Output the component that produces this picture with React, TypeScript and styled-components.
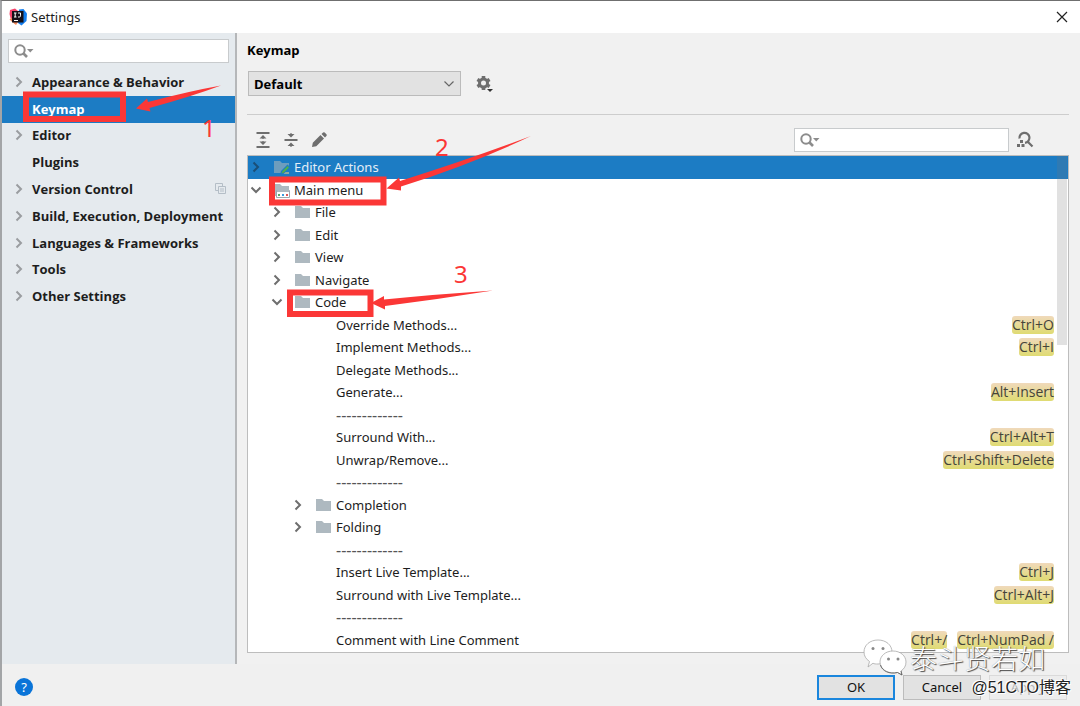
import React from 'react';
import styled, { createGlobalStyle, css } from 'styled-components';

const GlobalStyle = createGlobalStyle`
  *, *::before, *::after { box-sizing: border-box; }
  body { margin: 0; background: #f1f1f1; }
  button, input, select { font: inherit; color: inherit; }
`;

const red = '#fb3736';
const blue = '#1c7cc4';

const Window = styled.div`
  position: relative;
  display: flex;
  flex-direction: column;
  min-height: 100vh;
  border-top: 1px solid #6f6f6f;
  border-left: 2px solid #a3a5a7;
  background: #f0f0f0;
  font: 13px/18px "Noto Sans", "Noto Sans CJK SC", sans-serif;
  color: #1d1d1d;
`;

const TitleBar = styled.header`
  display: flex;
  align-items: center;
  gap: 4px;
  height: 32px;
  padding: 0 12px 0 7px;
  background: #fff;
`;

const WindowTitle = styled.h1`
  flex: 1;
  margin: 0;
  font-size: 13px;
  font-weight: 400;
`;

const IconButton = styled.button`
  display: flex;
  align-items: center;
  justify-content: center;
  padding: 0;
  border: 0;
  background: none;
`;

const Body = styled.div`
  flex: 1;
  display: flex;
`;

const Sidebar = styled.aside`
  flex: none;
  width: 235px;
  padding-top: 6px;
  border-right: 2px solid #b5b7b9;
  background: #e5eaee;
`;

const SearchBox = styled.label`
  display: flex;
  align-items: center;
  height: 24px;
  padding-left: 5px;
  border: 1px solid #c8cbcd;
  background: #fff;
`;

const SideSearch = styled(SearchBox)`
  margin: 0 6px;
`;

const SearchInput = styled.input`
  flex: 1;
  min-width: 0;
  border: 0;
  outline: 0;
  background: transparent;
`;

const Categories = styled.nav`
  display: grid;
  grid-auto-rows: 1fr;
  height: 241px;
  margin-top: 6px;
`;

const Category = styled.a<{ $selected?: boolean }>`
  display: flex;
  align-items: center;
  padding: 0 9px 1px 11px;
  font-family: "Open Sans", sans-serif;
  font-weight: 700;
  color: #1d1d1d;
  text-decoration: none;
  ${p => p.$selected && css`
    background: ${blue};
    color: #fff;
  `}
`;

const CategoryArrow = styled.span`
  display: flex;
  width: 19px;
`;

const CategoryName = styled.span`
  flex: 1;
  white-space: nowrap;
`;

const Main = styled.main`
  flex: 1;
  display: flex;
  flex-direction: column;
  min-width: 0;
  padding: 7px 11px 11px 10px;
  background: #f1f1f1;
`;

const Heading = styled.h2`
  margin: 0;
  font-family: "Open Sans", sans-serif;
  font-size: 13px;
  line-height: 20px;
  color: #000;
`;

const SchemeRow = styled.div`
  display: flex;
  align-items: center;
  gap: 14px;
  margin-top: 11px;
  padding: 0 0 18px 1px;
  border-bottom: 1px solid #cdcdcd;
`;

const SelectWrap = styled.div`
  display: grid;
  align-items: center;
  width: 213px;
  height: 25px;
  border: 1px solid #bbb;
  background: #e2e2e2;

  > * { grid-area: 1 / 1; }
  > svg { justify-self: end; margin-right: 5px; pointer-events: none; }
`;

const SchemeSelect = styled.select`
  appearance: none;
  width: 100%;
  height: 100%;
  padding: 0 5px;
  border: 0;
  background: transparent;
  font-family: "Open Sans", sans-serif;
  font-weight: 700;
  color: #000;
`;

const Toolbar = styled.div`
  display: flex;
  align-items: center;
  justify-content: space-between;
  margin-top: 13px;
  padding: 0 35px 0 8px;
`;

const ToolGroup = styled.div<{ $gap: number }>`
  display: flex;
  align-items: center;
  gap: ${p => p.$gap}px;
`;

const TreeSearch = styled(SearchBox)`
  width: 215px;
`;

const TreePanel = styled.div`
  position: relative;
  flex: 1;
  display: flex;
  margin-top: 3px;
  border: 1px solid #bdbdbd;
  background: #fff;
`;

const Tree = styled.ul`
  flex: 1;
  display: flex;
  flex-direction: column;
  margin: 0;
  padding: 0 0 1px;
  list-style: none;
`;

const Row = styled.li<{ $depth: number; $selected?: boolean }>`
  flex: 1 1 22px;
  display: flex;
  align-items: center;
  padding: 0 14px 0 ${p => p.$depth * 21 + 2}px;
  background: ${p => (p.$selected ? blue : 'transparent')};
  color: ${p => (p.$selected ? '#e4eef7' : '#1d1d1d')};
`;

const RowArrow = styled.span`
  display: flex;
  width: 24px;
`;

const RowIcon = styled.span`
  display: flex;
  width: 20px;
`;

const RowLabel = styled.span<{ $divider?: boolean }>`
  flex: 1;
  font-size: ${p => (p.$divider ? 16 : 13)}px;
  color: ${p => (p.$divider ? '#555' : 'inherit')};
  white-space: nowrap;
`;

const Shortcuts = styled.span`
  display: flex;
  gap: 10px;
`;

const Shortcut = styled.kbd`
  height: 18px;
  border-radius: 3px;
  background: linear-gradient(#f0d9bb, #dfdb72);
  font: 14px/18px "Open Sans", sans-serif;
  color: #45443a;
`;

const Scrollbar = styled.div`
  position: absolute;
  top: 0;
  right: 1px;
  width: 10px;
  height: 189px;
  background: rgba(120, 120, 120, 0.22);
`;

const Footer = styled.footer`
  display: flex;
  align-items: center;
  gap: 8px;
  height: 42px;
  padding: 4px 13px 0 13px;
`;

const HelpButton = styled.button`
  width: 18px;
  height: 18px;
  margin-right: auto;
  padding: 0;
  border: 0;
  border-radius: 50%;
  background: #0a74d8;
  font-size: 13px;
  line-height: 18px;
  color: #fff;
`;

const DialogButton = styled.button<{ $primary?: boolean }>`
  width: 78px;
  height: 25px;
  padding: 0 0 1px;
  border: ${p => (p.$primary ? '2px solid #1a86dd' : '1px solid #bcbcbc')};
  background: #e2e2e2;
  color: #111;

  &:disabled {
    border-color: #dadada;
    background: #ededed;
    color: #b4b4b4;
  }
`;

const Annotations = styled.svg`
  position: absolute;
  top: -1px;
  left: -2px;
  pointer-events: none;
  font: 24px "Noto Sans", sans-serif;
`;

const AuthorMark = styled.div`
  position: absolute;
  right: 35px;
  bottom: 29px;
  display: flex;
  align-items: center;
  gap: 3px;
  font: 300 27px/38px "Noto Sans CJK SC", sans-serif;
  color: #fff;
  text-shadow: 1px 1px 1px #444, 0 0 1px #888;
  pointer-events: none;
`;

const SiteMark = styled.div`
  position: absolute;
  right: 9px;
  bottom: 7px;
  font: 16px/22px "Liberation Sans", "Noto Sans CJK SC", sans-serif;
  color: #222;
  text-shadow: 1px 1px 0 #fff, -1px -1px 0 #fff;
  pointer-events: none;
`;

const Chevron = ({ open = false, color = '#6e6e6e' }: { open?: boolean; color?: string }) => (
  <svg width="12" height="12" viewBox="0 0 12 12" fill="none" stroke={color} strokeWidth="2">
    <path d={open ? 'M1.5 3.5 6 8l4.500-4.500' : 'M3.500 1.500 8 6l-4.500 4.500'} />
  </svg>
);

const SearchIcon = () => (
  <svg width="20" height="16" viewBox="0 0 20 16" fill="none" stroke="#8c8c8c">
    <circle cx="6" cy="7" r="4.700" strokeWidth="2" />
    <path d="m9.500 10.500 3.500 3.500" strokeWidth="2.600" />
    <path d="M13 6h6.500l-3.250 3.500z" fill="#8c8c8c" stroke="none" />
  </svg>
);

const CloseIcon = () => (
  <svg width="12" height="12" viewBox="0 0 12 12" stroke="#222" strokeWidth="1.200">
    <path d="m1 1 10 10M11 1 1 11" />
  </svg>
);

const AppLogo = () => (
  <svg width="18" height="18" viewBox="0 0 18 18">
    <path d="m1 2 5-1.500L9 3l-2 8-5 1-1.500-6z" fill="#f5406a" />
    <path d="m.5 11.500 4-3 5 5L7 17l-2-1.500z" fill="#f58a5c" />
    <path d="M10 1.500 14.500 1 18 5.500l-.5 7.500-5 4.500L9 15z" fill="#147ff0" />
    <path d="M3 3h11.500v11.500H3z" fill="#151019" />
    <path
      d="M5 5h2.500M6.200 5v4M5 9h2.500M9 5h2.500v2.800q0 1.200-1.200 1.200H9M5 12.500h4"
      stroke="#fff"
      fill="none"
    />
  </svg>
);

const CopyIcon = () => (
  <svg width="11" height="11" viewBox="0 0 11 11" fill="none" stroke="#b4bec7">
    <path d="M3 7.500H.5v-7h7V3" />
    <path d="M3.500 3.500h7v7h-7zM5 6h4M5 8h4" />
  </svg>
);

const GearIcon = () => (
  <svg width="20" height="20" viewBox="0 0 20 20">
    <circle cx="8.500" cy="9" r="4" fill="none" stroke="#6e6e6e" strokeWidth="3" />
    <path
      d="M8.500 2v3M8.500 13v3M2.400 5.500 5 7M12 11l2.600 1.500M2.400 12.500 5 11M12 7l2.600-1.500"
      stroke="#6e6e6e"
      strokeWidth="3.600"
    />
    <path d="M12 15h6l-3 3z" fill="#333" />
  </svg>
);

const ExpandAllIcon = () => (
  <svg width="16" height="16" viewBox="0 0 16 16" fill="#6e6e6e">
    <path d="M1.500 0h13v2h-13zM1.500 14h13v2h-13zM8 3l3.500 3.500h-7zM8 13 4.500 9.500h7zM7.400 6h1.200v1H7.400zM7.400 9h1.200v1H7.400z" />
  </svg>
);

const CollapseAllIcon = () => (
  <svg width="16" height="16" viewBox="0 0 16 16" fill="#6e6e6e">
    <path d="M1.500 7h13v2h-13zM8 5.500 4.500 2h7zM8 10.500 11.500 14h-7zM7.400 1h1.200v2H7.400zM7.400 13h1.200v2H7.400z" />
  </svg>
);

const PencilIcon = () => (
  <svg width="16" height="16" viewBox="0 0 16 16" fill="#6e6e6e">
    <path d="m1 15 .8-4.300L9.500 3 13 6.500l-7.700 7.700zM10.500 2l1.600-1.500q.8-.6 1.600.1l1.700 1.700q.8.800 0 1.600L14 5.500z" />
  </svg>
);

const FindShortcutIcon = () => (
  <svg width="18" height="18" viewBox="0 0 18 18">
    <path d="M3.500 7.500a5 5 0 1 1 5.500 4.300M11.500 10.500l5 5" fill="none" stroke="#6e6e6e" strokeWidth="2.200" />
    <path d="M4 9h3v3H4zM1 13h3v3H1zM5.500 13h3v3h-3z" fill="#6e6e6e" />
  </svg>
);

type FolderKind = 'plain' | 'edit' | 'menu';

const FolderIcon = ({ kind }: { kind: FolderKind }) => (
  <svg width="16" height="16" viewBox="0 0 16 16">
    <path d="M0 2h6l2 2h7v10H0z" fill={kind === 'edit' ? '#6d9dbd' : '#aeb9c0'} />
    {kind === 'edit' && (
      <>
        <path d="m6 16 1-4 6.500-6.500L16 8v8z" fill={blue} />
        <path d="m7.500 14.500 1-2.500 5-5 1.500 1.500-5 5z" fill="#4fb04c" />
        <path d="M11.500 13H15v2h-5.500z" fill="#8aa9a0" />
      </>
    )}
    {kind === 'menu' && (
      <>
        <path d="M2.500 8.500h13v7h-13z" fill="#fff" stroke="#9aa7b0" />
        <path d="M3 8h12v2H3z" fill="#aeb9c0" />
        <path d="M4 12h2v2H4z" fill="#59a869" />
        <path d="M8 12h2v2H8z" fill="#3b9bdc" />
        <path d="M12 12h2v2h-2z" fill="#e05555" />
      </>
    )}
  </svg>
);

const WeChatIcon = () => (
  <svg width="44" height="38" viewBox="0 0 44 38" fill="#fff" stroke="#aaa" strokeWidth=".8">
    <path d="M15 1c8 0 14 5 14 12 0 6-6 12-14 12-2 0-4 0-5-.8L5 28l1.500-5.500C3 20 1 17 1 13 1 6 7 1 15 1z" />
    <path d="M30 12c7.500 0 13 5 13 11 0 4-2 7-5 9l1 4-4.500-2.500c-9 2-17.500-3-17.500-10.500 0-6 5.500-11 13-11z" />
    <path d="M17.500 26c1.500 6 9 9.500 17 7.500l4.500 2.500-1-4" fill="none" stroke="#555" />
    <g fill="#888" stroke="none">
      <circle cx="10" cy="9.500" r="1.500" />
      <circle cx="20" cy="9.500" r="1.500" />
      <circle cx="25.500" cy="20" r="1.500" />
      <circle cx="35" cy="20" r="1.500" />
    </g>
  </svg>
);

const categories = [
  { name: 'Appearance & Behavior', parent: true },
  { name: 'Keymap', selected: true },
  { name: 'Editor', parent: true },
  { name: 'Plugins' },
  { name: 'Version Control', parent: true, shared: true },
  { name: 'Build, Execution, Deployment', parent: true },
  { name: 'Languages & Frameworks', parent: true },
  { name: 'Tools', parent: true },
  { name: 'Other Settings', parent: true },
];

interface TreeItem {
  label: string;
  depth: number;
  folder?: FolderKind;
  open?: boolean;
  selected?: boolean;
  divider?: boolean;
  keys?: string[];
}

const divider: TreeItem = { label: '-------------', depth: 2, divider: true };

const items: TreeItem[] = [
  { label: 'Editor Actions', depth: 0, folder: 'edit', selected: true },
  { label: 'Main menu', depth: 0, folder: 'menu', open: true },
  { label: 'File', depth: 1, folder: 'plain' },
  { label: 'Edit', depth: 1, folder: 'plain' },
  { label: 'View', depth: 1, folder: 'plain' },
  { label: 'Navigate', depth: 1, folder: 'plain' },
  { label: 'Code', depth: 1, folder: 'plain', open: true },
  { label: 'Override Methods...', depth: 2, keys: ['Ctrl+O'] },
  { label: 'Implement Methods...', depth: 2, keys: ['Ctrl+I'] },
  { label: 'Delegate Methods...', depth: 2 },
  { label: 'Generate...', depth: 2, keys: ['Alt+Insert'] },
  divider,
  { label: 'Surround With...', depth: 2, keys: ['Ctrl+Alt+T'] },
  { label: 'Unwrap/Remove...', depth: 2, keys: ['Ctrl+Shift+Delete'] },
  divider,
  { label: 'Completion', depth: 2, folder: 'plain' },
  { label: 'Folding', depth: 2, folder: 'plain' },
  divider,
  { label: 'Insert Live Template...', depth: 2, keys: ['Ctrl+J'] },
  { label: 'Surround with Live Template...', depth: 2, keys: ['Ctrl+Alt+J'] },
  divider,
  { label: 'Comment with Line Comment', depth: 2, keys: ['Ctrl+/', 'Ctrl+NumPad /'] },
];

export default function App() {
  return (
    <>
      <GlobalStyle />
      <Window>
        <TitleBar>
          <AppLogo />
          <WindowTitle>Settings</WindowTitle>
          <IconButton aria-label="Close"><CloseIcon /></IconButton>
        </TitleBar>
        <Body>
          <Sidebar>
            <SideSearch>
              <SearchIcon />
              <SearchInput type="text" aria-label="Search settings" />
            </SideSearch>
            <Categories>
              {categories.map(c => (
                <Category key={c.name} href="#" $selected={c.selected}>
                  <CategoryArrow>{c.parent && <Chevron color="#9a9da0" />}</CategoryArrow>
                  <CategoryName>{c.name}</CategoryName>
                  {c.shared && <CopyIcon />}
                </Category>
              ))}
            </Categories>
          </Sidebar>
          <Main>
            <Heading>Keymap</Heading>
            <SchemeRow>
              <SelectWrap>
                <SchemeSelect aria-label="Keymap scheme" defaultValue="Default">
                  <option>Default</option>
                </SchemeSelect>
                <svg width="12" height="12" viewBox="0 0 12 12" fill="none" stroke="#666" strokeWidth="1.200">
                  <path d="m1.500 3.500 4.500 4.500 4.500-4.500" />
                </svg>
              </SelectWrap>
              <IconButton aria-label="Scheme actions"><GearIcon /></IconButton>
            </SchemeRow>
            <Toolbar>
              <ToolGroup $gap={12}>
                <IconButton aria-label="Expand all"><ExpandAllIcon /></IconButton>
                <IconButton aria-label="Collapse all"><CollapseAllIcon /></IconButton>
                <IconButton aria-label="Edit shortcut"><PencilIcon /></IconButton>
              </ToolGroup>
              <ToolGroup $gap={7}>
                <TreeSearch>
                  <SearchIcon />
                  <SearchInput type="text" aria-label="Search actions" />
                </TreeSearch>
                <IconButton aria-label="Find by shortcut"><FindShortcutIcon /></IconButton>
              </ToolGroup>
            </Toolbar>
            <TreePanel>
              <Tree>
                {items.map((item, i) => (
                  <Row key={i} $depth={item.depth} $selected={item.selected}>
                    <RowArrow>
                      {item.folder && <Chevron open={item.open} color={item.selected ? '#1a4f78' : undefined} />}
                    </RowArrow>
                    <RowIcon>{item.folder && <FolderIcon kind={item.folder} />}</RowIcon>
                    <RowLabel $divider={item.divider}>{item.label}</RowLabel>
                    {item.keys && (
                      <Shortcuts>
                        {item.keys.map(k => <Shortcut key={k}>{k}</Shortcut>)}
                      </Shortcuts>
                    )}
                  </Row>
                ))}
              </Tree>
              <Scrollbar />
            </TreePanel>
          </Main>
        </Body>
        <Footer>
          <HelpButton aria-label="Help">?</HelpButton>
          <DialogButton $primary>OK</DialogButton>
          <DialogButton>Cancel</DialogButton>
          <DialogButton disabled>Apply</DialogButton>
        </Footer>
        <Annotations width="560" height="330" viewBox="0 0 560 330">
          <g fill="none" stroke={red} strokeWidth="6">
            <path d="M26 94.500h97v24.500H26z" />
            <path d="M272 179.500h111.500v23H272z" />
            <path d="M290 292.500h80.500v21.500H290z" />
          </g>
          <g fill={red}>
            <path d="m136 108.500 11-10 1 3.500Q190 91 221 85.500 190 97 149.500 108l1 3.500z" />
            <path d="m386.500 188.500 12.500-11 1 3.500Q470 159 531 136 470 165 401 186.500v4z" />
            <path d="m371 303 13-7v3.500Q440 294 493 290.500 440 299 385 306v3.500z" />
            <text x="202" y="137">1</text>
            <text x="435" y="156">2</text>
            <text x="454" y="283">3</text>
          </g>
        </Annotations>
        <AuthorMark><WeChatIcon />泰斗贤若如</AuthorMark>
        <SiteMark>@51CTO博客</SiteMark>
      </Window>
    </>
  );
}
